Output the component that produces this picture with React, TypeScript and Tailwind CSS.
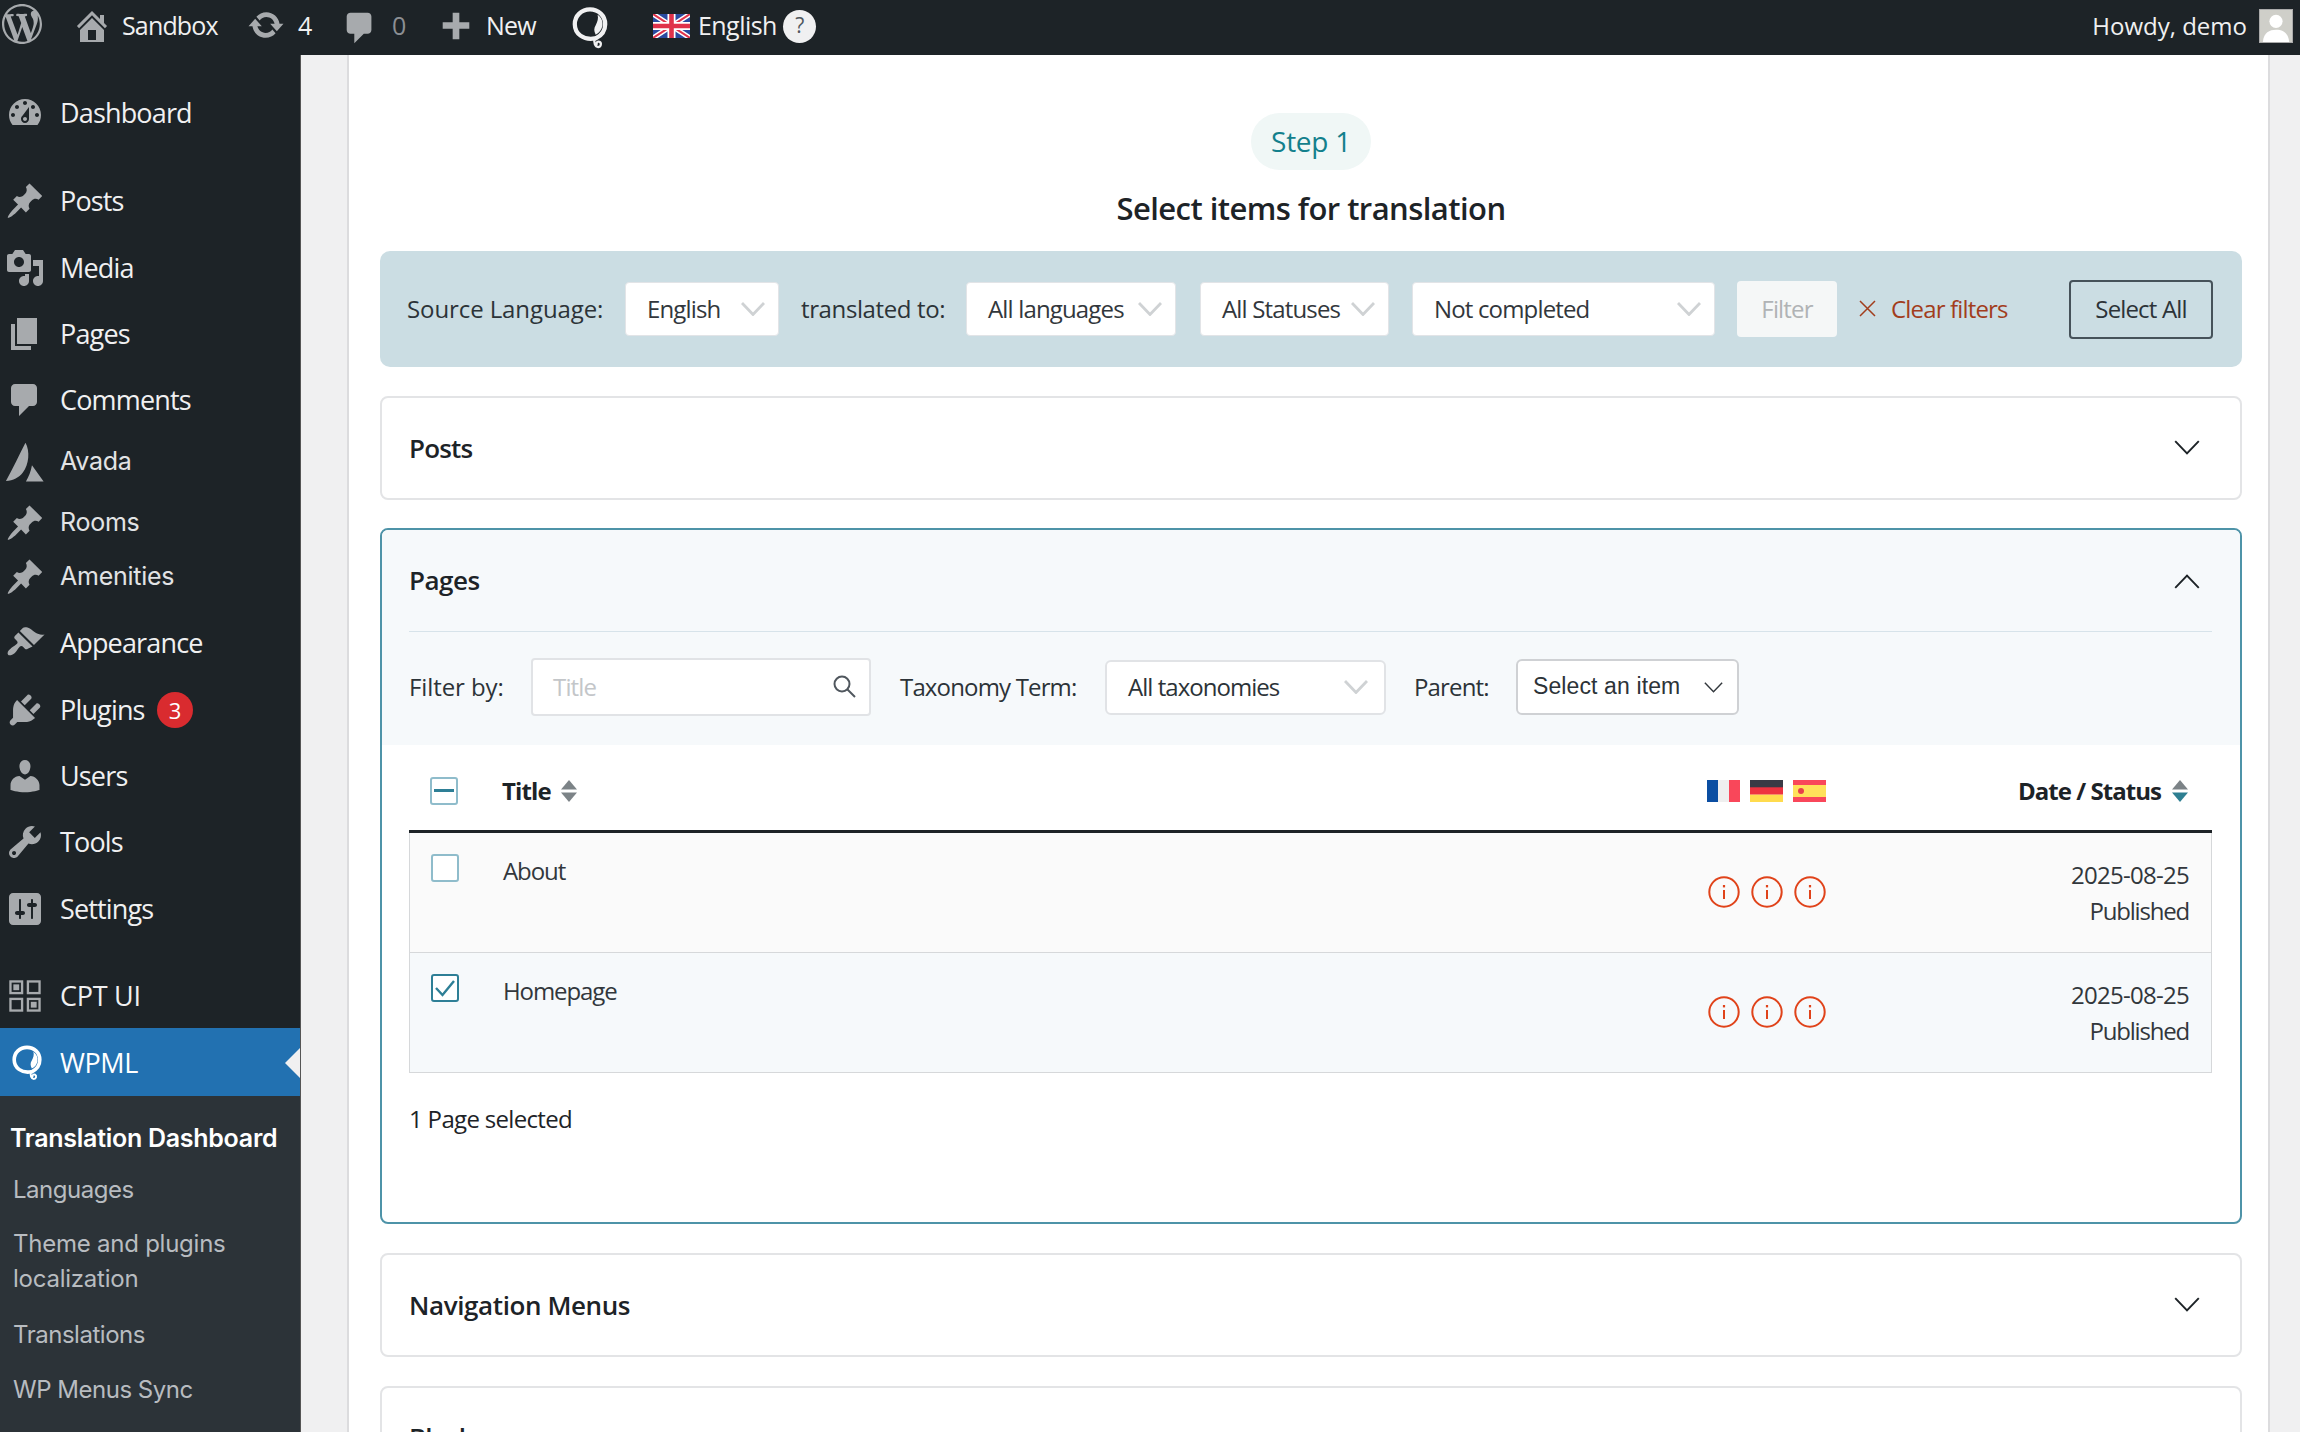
import React from "react";

const P = {
  wp: "M20 10c0-5.51-4.49-10-10-10C4.48 0 0 4.49 0 10c0 5.52 4.48 10 10 10 5.51 0 10-4.48 10-10zM7.78 15.37L4.37 6.22c.55-.02 1.17-.08 1.17-.08.5-.06.44-1.13-.06-1.11 0 0-1.45.11-2.37.11-.18 0-.37 0-.58-.01C4.12 2.69 6.87 1.11 10 1.11c2.33 0 4.45.87 6.05 2.34-.68-.11-1.65.39-1.65 1.58 0 .74.45 1.36.9 2.1.35.61.55 1.36.55 2.46 0 1.49-1.4 5-1.4 5l-3.03-8.37c.54-.02.82-.17.82-.17.5-.05.44-1.25-.06-1.22 0 0-1.44.12-2.38.12-.87 0-2.33-.12-2.33-.12-.5-.03-.56 1.2-.06 1.22l.92.08 1.26 3.41zM17.41 10c.24-.64.74-1.87.43-4.25.7 1.29 1.05 2.71 1.05 4.25 0 3.29-1.73 6.24-4.4 7.78.97-2.59 1.94-5.2 2.92-7.78zM6.1 18.09C3.12 16.65 1.11 13.53 1.11 10c0-1.3.23-2.48.72-3.59C3.25 10.3 4.67 14.2 6.1 18.09zm4.03-6.63l2.58 6.98c-.86.29-1.76.45-2.71.45-.79 0-1.57-.11-2.29-.33.81-2.38 1.62-4.74 2.42-7.1z",
  home: "M16 8.5l1.53 1.53-1.06 1.06L10 4.62l-6.47 6.47-1.06-1.06L10 2.5l4 4v-2h2v4zm-6-2.46l6 5.99V18H4v-5.97zM12 17v-5H8v5h4z",
  update: "M10.2 3.28c3.53 0 6.43 2.61 6.92 6h2.08l-3.5 4-3.5-4h2.32c-.45-1.97-2.21-3.45-4.32-3.45-1.45 0-2.73.71-3.54 1.78L4.95 5.66C6.23 4.2 8.11 3.28 10.2 3.28zm-.4 13.44c-3.52 0-6.43-2.61-6.92-6H.8l3.5-4c1.17 1.33 2.33 2.67 3.5 4H5.48c.45 1.97 2.21 3.45 4.32 3.45 1.45 0 2.73-.71 3.54-1.78l1.71 1.95c-1.28 1.46-3.15 2.38-5.25 2.38z",
  comment: "M5 2h9c1.1 0 2 .9 2 2v7c0 1.1-.9 2-2 2h-2l-5 5v-5H5c-1.1 0-2-.9-2-2V4c0-1.1.9-2 2-2z",
  plus: "M17 8v3.5h-5.25V17h-3.5v-5.5H3V8h5.25V3h3.5v5z",
  dashboard: "M3.76 16h12.48c1.1-1.37 1.76-3.11 1.76-5 0-4.42-3.58-8-8-8s-8 3.58-8 8c0 1.89.66 3.63 1.76 5zM10 4c.55 0 1 .45 1 1s-.45 1-1 1-1-.45-1-1 .45-1 1-1zM6 6c.55 0 1 .45 1 1s-.45 1-1 1-1-.45-1-1 .45-1 1-1zm8 0c.55 0 1 .45 1 1s-.45 1-1 1-1-.45-1-1 .45-1 1-1zm-5.37 5.55L12 7v6c0 1.1-.9 2-2 2s-2-.9-2-2c0-.57.24-1.08.63-1.45zM4 10c.55 0 1 .45 1 1s-.45 1-1 1-1-.45-1-1 .45-1 1-1zm12 0c.55 0 1 .45 1 1s-.45 1-1 1-1-.45-1-1 .45-1 1-1zm-5 3c0-.55-.45-1-1-1s-1 .45-1 1 .45 1 1 1 1-.45 1-1z",
  pin: "M10.44 3.02l1.82-1.82 6.36 6.35-1.83 1.82c-1.05-.68-2.48-.57-3.41.36l-.75.75c-.92.93-1.04 2.35-.35 3.41l-1.83 1.82-2.41-2.41-2.8 2.79c-.42.42-3.38 2.71-3.8 2.29s1.86-3.39 2.28-3.81l2.79-2.79L4.1 9.36l1.83-1.82c1.05.69 2.48.57 3.4-.36l.75-.75c.93-.92 1.05-2.35.36-3.41z",
  media: "M13 11V4c0-.55-.45-1-1-1h-1.67L9 1H5L3.67 3H2c-.55 0-1 .45-1 1v7c0 .55.45 1 1 1h10c.55 0 1-.45 1-1zM7 4.5c1.38 0 2.5 1.12 2.5 2.5S8.38 9.5 7 9.5 4.5 8.38 4.5 7 5.62 4.5 7 4.5zM14 6h5v10.5c0 1.38-1.12 2.5-2.5 2.5S14 17.88 14 16.5s1.12-2.5 2.5-2.5c.17 0 .34.02.5.05V9h-3V6zm-4 8.05V13h2v3.5c0 1.38-1.12 2.5-2.5 2.5S7 17.88 7 16.5 8.12 14 9.5 14c.17 0 .34.02.5.05z",
  pages: "M6 15V2h10v13H6zm-1 1h8v2H3V5h2v11z",
  avada: "M10.2 1.5c2 3.6 1.6 9.3-1.2 12.9-1.6 2-4 3.3-7.2 3.6C4.8 12.5 7.4 7 10.2 1.5zM13 11.2l5 7h-7.6c1.2-2 2.1-4.4 2.6-7z",
  appearance: "M14.48 11.06L7.41 3.99l1.5-1.5c.5-.56 2.3-.47 3.51.32 1.21.8 1.43 1.28 2.91 2.1 1.18.64 2.45 1.26 4.45.85zm-.71.71L6.7 4.7 4.93 6.47c-.39.39-.39 1.02 0 1.41l1.06 1.06c.39.39.39 1.03 0 1.42-.6.6-1.43 1.11-2.21 1.69-.35.26-.7.53-1.01.84C1.43 13.71.96 15.12 1.54 15.9c.56.58 2.07.22 3.4-.92.3-.32.56-.66.84-1.01.58-.78 1.09-1.61 1.69-2.21.39-.39 1.03-.39 1.42 0l1.06 1.06c.39.39 1.02.39 1.41 0z",
  plugins: "M13.11 4.36L9.87 7.6 8 5.73l3.24-3.24c.35-.34 1.05-.2 1.56.32.52.51.66 1.21.31 1.55zm-8 1.77l.91-1.12 9.01 9.01-1.19.84c-.71.71-2.63 1.16-3.82 1.16H6.14L4.9 17.26c-.59.59-1.54.59-2.12 0-.59-.58-.59-1.53 0-2.12l1.24-1.24v-3.88c0-1.13.4-3.19 1.09-3.89zm7.26 3.97l3.24-3.24c.34-.35 1.04-.21 1.55.31.52.51.66 1.21.31 1.55l-3.24 3.25z",
  users: "M10 9.25c-2.27 0-2.73-3.44-2.73-3.44C7 4.02 7.82 2 9.97 2c2.16 0 2.98 2.02 2.71 3.81 0 0-.41 3.44-2.68 3.44zm0 2.57L12.72 10c2.39 0 4.52 2.33 4.52 4.53v2.49s-3.65 1.13-7.24 1.13c-3.65 0-7.24-1.13-7.24-1.13v-2.49c0-2.25 1.94-4.48 4.47-4.48z",
  tools: "M16.68 9.77c-1.34 1.34-3.3 1.67-4.95.99l-5.41 6.52c-.99.99-2.59.99-3.58 0s-.99-2.59 0-3.57l6.52-5.42c-.68-1.65-.35-3.61.99-4.95 1.28-1.28 3.12-1.62 4.72-1.06l-2.89 2.89 2.82 2.82 2.86-2.87c.53 1.58.18 3.39-1.08 4.65zM3.81 16.21c.4.39 1.04.39 1.43 0 .4-.4.4-1.04 0-1.43-.39-.4-1.03-.4-1.43 0-.39.39-.39 1.03 0 1.43z",
  settings: "M18 16V4c0-1.1-.9-2-2-2H4c-1.1 0-2 .9-2 2v12c0 1.1.9 2 2 2h12c1.1 0 2-.9 2-2zM8 11h1c.55 0 1 .45 1 1s-.45 1-1 1H8v1.5c0 .28-.22.5-.5.5s-.5-.22-.5-.5V13H6c-.55 0-1-.45-1-1s.45-1 1-1h1V5.5c0-.28.22-.5.5-.5s.5.22.5.5V11zm5-2h-1c-.55 0-1-.45-1-1s.45-1 1-1h1V5.5c0-.28.22-.5.5-.5s.5.22.5.5V7h1c.55 0 1 .45 1 1s-.45 1-1 1h-1v5.5c0 .28-.22.5-.5.5s-.5-.22-.5-.5V9z",
};

function Dash({ d, className, vb }: { d: string; className: string; vb?: string }) {
  return (
    <svg viewBox={vb ?? "0 0 20 20"} className={className} fill="currentColor">
      <path d={d} fillRule="evenodd" />
    </svg>
  );
}

function Cpt({ className }: { className: string }) {
  return (
    <svg viewBox="0 0 33 33" className={className} fill="none" stroke="currentColor" strokeWidth="2.4">
      <rect x="1.500" y="1.500" width="12" height="12" />
      <rect x="4.500" y="4.500" width="6" height="6" fill="currentColor" stroke="none" />
      <rect x="19.500" y="1.500" width="12" height="12" />
      <rect x="1.500" y="19.500" width="12" height="12" />
      <rect x="19.500" y="19.500" width="12" height="12" />
      <rect x="22.500" y="22.500" width="6" height="6" fill="currentColor" stroke="none" />
    </svg>
  );
}

function Wpml({ className }: { className: string }) {
  return (
    <svg viewBox="0 0 40 46" className={className} fill="none" stroke="currentColor" strokeLinecap="round">
      <path d="M25 34C13 36 4 29 4 19 4 10 11 3.500 20 3.500c9 0 16 6.500 16 15.500 0 7-4 12-10 15" strokeWidth="4.500" />
      <path d="M28 9c4 3 6 7 5 12-1 4-3 7-7 9-2-4-2-7 0-10 2-4 3-7 2-11z" fill="currentColor" stroke="none" />
      <path d="M25 34c-1.500 4 .5 9 3.500 9 3 0 4-4 1.500-5.500-2-.8-3.500.8-3 2.500" strokeWidth="2.400" />
    </svg>
  );
}

function UkFlag() {
  return (
    <svg viewBox="0 0 37 24" className="w-[37px] h-[24px] ml-[5px] mr-[8px] shrink-0">
      <rect width="37" height="24" fill="#2a4a9f" />
      <path d="M0 0L37 24M37 0L0 24" stroke="#fff" strokeWidth="5" />
      <path d="M0 0L37 24M37 0L0 24" stroke="#e0324a" strokeWidth="2" />
      <path d="M18.500 0V24M0 12H37" stroke="#fff" strokeWidth="8" />
      <path d="M18.500 0V24M0 12H37" stroke="#e0324a" strokeWidth="4.600" />
    </svg>
  );
}

function Chevron({ className, up, sw }: { className: string; up?: boolean; sw?: string }) {
  return (
    <svg viewBox="0 0 24 14" className={className} fill="none" stroke="currentColor" strokeWidth={sw ?? "1.800"}>
      <path d={up ? "M1 13L12 1.500 23 13" : "M1 1l11 11.500L23 1"} />
    </svg>
  );
}

function Select({ label, className }: { label: string; className: string }) {
  return (
    <div className={`flex items-center justify-between bg-white rounded-[4px] border border-[#e2e4e7] h-[54px] pl-[21px] pr-[13px] shrink-0 text-[#32373c] ${className}`}>
      <span>{label}</span>
      <Chevron className="w-[24px] h-[14px] text-[#cfd2d4]" sw="2.800" />
    </div>
  );
}

function SortArrows({ teal }: { teal?: boolean }) {
  return (
    <svg viewBox="0 0 18 22" className="w-[18px] h-[22px] shrink-0">
      <path d="M9 0l8 9.500H1z" fill="#7c8387" />
      <path d="M9 22l8-9.500H1z" fill={teal ? "#2e7f92" : "#7c8387"} />
    </svg>
  );
}

function Info() {
  return (
    <svg viewBox="0 0 32 32" className="w-[32px] h-[32px] shrink-0" fill="none" stroke="#e0431a" strokeWidth="2">
      <circle cx="16" cy="16" r="14.700" />
      <path d="M16 14v9" />
      <path d="M16 9v2.400" strokeWidth="2.200" />
    </svg>
  );
}

function Flags() {
  return (
    <div className="flex gap-[10px] mr-[1px]">
      <svg viewBox="0 0 33 22" className="w-[33px] h-[22px]">
        <rect width="11" height="22" fill="#0b4ea2" />
        <rect x="11" width="11" height="22" fill="#efefef" />
        <rect x="22" width="11" height="22" fill="#f9475a" />
      </svg>
      <svg viewBox="0 0 33 22" className="w-[33px] h-[22px]">
        <rect width="33" height="8" fill="#3a3a45" />
        <rect y="7.300" width="33" height="7.400" fill="#ee3340" />
        <rect y="14.700" width="33" height="7.300" fill="#ffdb4d" />
      </svg>
      <svg viewBox="0 0 33 22" className="w-[33px] h-[22px]">
        <rect width="33" height="22" fill="#f9475a" />
        <rect y="5" width="33" height="12" fill="#ffe15a" />
        <circle cx="8" cy="11" r="3" fill="#e8404a" />
      </svg>
    </div>
  );
}

function Check({ state, className }: { state: "none" | "minus" | "check"; className?: string }) {
  return (
    <div className={`w-[28px] h-[28px] rounded-[3px] border-2 flex items-center justify-center bg-white shrink-0 ${state === "check" ? "border-[#2e7f96]" : "border-[#8fbccb]"} ${className ?? ""}`}>
      {state === "minus" && <div className="w-[20px] h-[3px] bg-[#2e7f96]" />}
      {state === "check" && (
        <svg viewBox="0 0 24 24" className="w-[24px] h-[24px]" fill="none" stroke="#2e7f96" strokeWidth="2.400">
          <path d="M3 12l6.500 7L21 5" />
        </svg>
      )}
    </div>
  );
}

const iconCls = "w-[40px] h-[40px] text-[#a7aaad] shrink-0";

function Row({ title, bg, check }: { title: string; bg: string; check: "none" | "check" }) {
  return (
    <div className={`flex h-[120px] border-x border-b border-[#d6d8da] ${bg}`}>
      <div className="w-[93px] pl-[21px] pt-[21px]">
        <Check state={check} />
      </div>
      <div className="flex-1 pt-[20px] text-[#32373c] tracking-[-0.045em]">{title}</div>
      <div className="flex gap-[11px] items-center pb-[2px]">
        <Info /><Info /><Info />
      </div>
      <div className="w-[385px] pr-[22px] pt-[24px] text-right text-[#32373c] leading-[36px]">
        <div className="tracking-[-0.03em]">2025-08-25</div>
        <div className="tracking-[-0.05em]">Published</div>
      </div>
    </div>
  );
}

function Card({ title, className }: { title: string; className: string }) {
  return (
    <div className={`rounded-[8px] border-2 border-[#e3e4e6] bg-white pl-[27px] pr-[40px] flex items-center justify-between text-[#1d2327] font-semibold text-[26px] shrink-0 h-[104px] ${className}`}>
      <span>{title}</span>
      <Chevron className="w-[26px] h-[15px] text-[#1d2327] mb-[2px]" />
    </div>
  );
}

const menu: { label: string; icon: string; cls: string; inter?: boolean; badge?: boolean; vb?: string }[] = [
  { label: "Dashboard", icon: P.dashboard, cls: "mt-[36px]" },
  { label: "Posts", icon: P.pin, cls: "mt-[44px]" },
  { label: "Media", icon: P.media, cls: "mt-[23px]" },
  { label: "Pages", icon: P.pages, cls: "mt-[22px]" },
  { label: "Comments", icon: P.comment, cls: "mt-[22px]" },
  { label: "Avada", icon: P.avada, cls: "mt-[18px]", inter: true, vb: "1.500 1.200 17 17.200" },
  { label: "Rooms", icon: P.pin, cls: "mt-[17px]", inter: true },
  { label: "Amenities", icon: P.pin, cls: "mt-[10px]", inter: true },
  { label: "Appearance", icon: P.appearance, cls: "mt-[22px]" },
  { label: "Plugins", icon: P.plugins, cls: "mt-[23px]", badge: true },
  { label: "Users", icon: P.users, cls: "mt-[22px]" },
  { label: "Tools", icon: P.tools, cls: "mt-[22px]" },
  { label: "Settings", icon: P.settings, cls: "mt-[23px]" },
];

export default function App() {
  return (
    <div className="h-[1432px] overflow-hidden flex flex-col font-['Open_Sans',sans-serif] text-[24px] tracking-[-0.035em] bg-[#f0f0f1]">
      {/* admin bar */}
      <header className="h-[55px] shrink-0 bg-[#1d2327] flex items-center pb-[3px] text-[#f0f0f1] text-[25px]">
        <Dash d={P.wp} className="w-[40px] h-[40px] text-[#a7aaad] ml-[2px] mb-[4px] shrink-0" />
        <Dash d={P.home} className="w-[40px] h-[40px] text-[#a7aaad] ml-[30px] shrink-0" />
        <span className="ml-[10px] w-[125px]">Sandbox</span>
        <Dash d={P.update} className="w-[38px] h-[38px] text-[#a7aaad] shrink-0 mb-[2px]" />
        <span className="ml-[13px] w-[43px]">4</span>
        <Dash d={P.comment} className="w-[38px] h-[38px] text-[#a7aaad] shrink-0 mt-[4px]" />
        <span className="ml-[13px] w-[45px] text-[#8c8f94]">0</span>
        <Dash d={P.plus} className="w-[38px] h-[38px] text-[#a7aaad] shrink-0" />
        <span className="ml-[11px] w-[85px]">New</span>
        <Wpml className="w-[38px] h-[46px] text-[#f0f0f1] shrink-0 mt-[4px]" />
        <div className="ml-[39px] flex items-center">
          <UkFlag />
          <span className="tracking-[-0.022em]">English</span>
          <span className="ml-[6px] w-[33px] h-[33px] rounded-full bg-[#f0f0f1] text-[#50575e] text-[21px] flex items-center justify-center">?</span>
        </div>
        <div className="ml-auto flex items-center text-[24px] tracking-[0]">
          <span>Howdy, demo</span>
          <div className="ml-[12px] mr-[7px] w-[34px] h-[34px] bg-[#cfcfc9] border border-[#aaa] overflow-hidden">
            <svg viewBox="0 0 34 34" className="w-full h-full" fill="#fff">
              <circle cx="17" cy="12" r="7" />
              <path d="M3 34c1-10 7-13 14-13s13 3 14 13z" />
            </svg>
          </div>
        </div>
      </header>

      <div className="flex flex-1 min-h-0">
        {/* sidebar */}
        <aside className="w-[301px] shrink-0 bg-[#1d2327] flex flex-col text-[#f0f0f1] border-r border-[#555]">
          {menu.map((m) => (
            <div key={m.label} className={`h-[44px] flex items-center pl-[5px] ${m.cls}`}>
              <Dash d={m.icon} className={iconCls} vb={m.vb} />
              <span className={`ml-[15px] ${m.inter ? "font-['Inter',sans-serif] text-[25px] tracking-[-0.01em] text-[#e2e3e5]" : "text-[27px]"}`}>{m.label}</span>
              {m.badge && (
                <span className="ml-[12px] w-[36px] h-[36px] rounded-full bg-[#d92b2f] text-white text-[22px] flex items-center justify-center">3</span>
              )}
            </div>
          ))}
          <div className="mt-[43px] h-[44px] flex items-center pl-[7px]">
            <Cpt className="w-[32px] h-[32px] text-[#a7aaad] ml-[2px] shrink-0" />
            <span className="ml-[19px] mt-[1px] text-[27px] tracking-[-0.01em]">CPT UI</span>
          </div>
          <div className="mt-[10px] h-[68px] bg-[#2271b1] flex items-center pl-[11px] text-white relative shrink-0">
            <Wpml className="w-[32px] h-[38px] text-white shrink-0 mt-[2px]" />
            <span className="ml-[17px] mt-[2px] text-[27px] tracking-[-0.015em]">WPML</span>
            <div className="absolute right-0 top-[20px] w-0 h-0 border-y-[15px] border-y-transparent border-r-[15px] border-r-[#f0f0f1]" />
          </div>
          <div className="flex-1 bg-[#2c3338] pt-[26px] text-[#b8bcc0] font-['Inter',sans-serif] text-[24px] tracking-[-0.02em] pl-[13px]">
            <div className="text-white font-semibold text-[25px] tracking-[-0.011em] -ml-[3px] h-[32px] leading-[32px] whitespace-nowrap">Translation Dashboard</div>
            <div className="mt-[20px] h-[32px] leading-[32px]">Languages</div>
            <div className="mt-[20px] leading-[35px] tracking-[-0.01em]">Theme and plugins<br />localization</div>
            <div className="mt-[23px] h-[32px] leading-[32px]">Translations</div>
            <div className="mt-[23px] h-[32px] leading-[32px]">WP Menus Sync</div>
          </div>
        </aside>

        {/* main */}
        <main className="flex-1 min-w-0 pl-[46px] pr-[30px]">
          <div className="h-full bg-white border-x-2 border-[#dcdcde] pl-[31px] pr-[26px] flex flex-col">
            <div className="self-center shrink-0 mt-[58px] w-[120px] h-[57px] rounded-full bg-[#f0f7f6] text-[#13808c] text-[28px] flex items-center justify-center pb-[2px] tracking-[-0.01em]">Step 1</div>
            <div className="self-center shrink-0 mt-[16px] h-[44px] leading-[44px] text-[#1d2327] font-semibold text-[31px] tracking-[-0.018em]">Select items for translation</div>

            {/* filter bar */}
            <div className="mt-[21px] h-[116px] shrink-0 bg-[#cbdde3] rounded-[10px] flex items-center pl-[27px] pr-[29px] text-[#2c3338]">
              <span className="w-[218px] tracking-[-0.004em]">Source Language:</span>
              <Select label="English" className="w-[154px]" />
              <span className="ml-[22px] w-[165px] tracking-[-0.016em]">translated to:</span>
              <Select label="All languages" className="w-[210px]" />
              <Select label="All Statuses" className="w-[189px] ml-[24px]" />
              <Select label="Not completed" className="w-[303px] ml-[23px]" />
              <div className="ml-[22px] w-[100px] h-[56px] bg-[#f5f7f7] rounded-[4px] text-[#b0b3b5] flex items-center justify-center">Filter</div>
              <svg viewBox="0 0 17 17" className="ml-[22px] w-[17px] h-[17px] mb-[2px]" fill="none" stroke="#a23d1d" strokeWidth="1.500">
                <path d="M1 1l15 15M16 1L1 16" />
              </svg>
              <span className="ml-[15px] text-[#a23d1d]">Clear filters</span>
              <div className="ml-auto w-[144px] h-[59px] rounded-[4px] border-2 border-[#46525a] flex items-center justify-center text-[#2c3338]">Select All</div>
            </div>

            <Card title="Posts" className="mt-[29px]" />

            {/* pages */}
            <div className="mt-[28px] h-[696px] shrink-0 rounded-[8px] border-2 border-[#4e93a8] overflow-hidden bg-white">
              <div className="bg-[#f6f9fb] h-[215px] pl-[27px] pr-[28px]">
                <div className="h-[102px] border-b border-[#d7e3ea] flex items-center justify-between text-[#1d2327] font-semibold text-[26px] tracking-[-0.02em]">
                  <span>Pages</span>
                  <Chevron up className="w-[26px] h-[15px] text-[#1d2327] mr-[12px] mt-[2px]" />
                </div>
                <div className="flex items-center h-[113px] pb-[3px] text-[#2c3338]">
                  <span className="w-[122px] tracking-[-0.004em]">Filter by:</span>
                  <div className="w-[340px] h-[58px] bg-white border-2 border-[#e1e3e6] rounded-[4px] flex items-center justify-between pl-[20px] pr-[13px]">
                    <span className="text-[#c3c6c9]">Title</span>
                    <svg viewBox="0 0 24 24" className="w-[24px] h-[24px] mb-[3px]" fill="none" stroke="#50575e" strokeWidth="2">
                      <circle cx="10" cy="10" r="7.500" />
                      <path d="M15.500 15.500L23 23" />
                    </svg>
                  </div>
                  <span className="ml-[29px] w-[205px]">Taxonomy Term:</span>
                  <div className="w-[281px] h-[55px] bg-white border-2 border-[#e1e3e6] rounded-[6px] flex items-center justify-between pl-[21px] pr-[16px] shrink-0">
                    <span className="tracking-[-0.04em]">All taxonomies</span>
                    <Chevron className="w-[24px] h-[14px] text-[#cfd2d4]" sw="2.800" />
                  </div>
                  <span className="ml-[28px] w-[74px]">Parent:</span>
                  <div className="ml-[28px] w-[223px] h-[56px] bg-white border-2 border-[#cfd1d4] rounded-[6px] flex items-center justify-between pl-[15px] pr-[14px] shrink-0 font-['Liberation_Sans',sans-serif] text-[23px] tracking-[0.005em]">
                    <span className="mb-[2px]">Select an item</span>
                    <Chevron className="w-[19px] h-[11px] text-[#32373c]" />
                  </div>
                </div>
              </div>

              <div className="pl-[27px] pr-[28px]">
                <div className="h-[88px] flex items-center border-b-[3px] border-[#1d2327] pt-[6px]">
                  <div className="w-[93px] pl-[21px]">
                    <Check state="minus" />
                  </div>
                  <span className="font-bold text-[#1d2327]">Title</span>
                  <span className="ml-[9px]"><SortArrows /></span>
                  <div className="ml-auto">
                    <Flags />
                  </div>
                  <div className="w-[385px] pr-[23px] flex items-center justify-end gap-[10px]">
                    <span className="font-bold text-[#1d2327] tracking-[-0.04em]">Date / Status</span>
                    <SortArrows teal />
                  </div>
                </div>
                <Row title="About" bg="bg-[#fafafa]" check="none" />
                <Row title="Homepage" bg="bg-[#f6f9fb]" check="check" />
              </div>
              <div className="mt-[29px] pl-[27px] text-[#1d2327] leading-[34px] tracking-[-0.028em]">1 Page selected</div>
            </div>

            <Card title="Navigation Menus" className="mt-[29px] tracking-[-0.015em]" />
            <div className="mt-[29px] h-[104px] shrink-0 rounded-[8px] border-2 border-[#e3e4e6] bg-white pl-[27px] pt-[30px] text-[#1d2327] font-semibold text-[26px]">Blocks</div>
          </div>
        </main>
      </div>
    </div>
  );
}
